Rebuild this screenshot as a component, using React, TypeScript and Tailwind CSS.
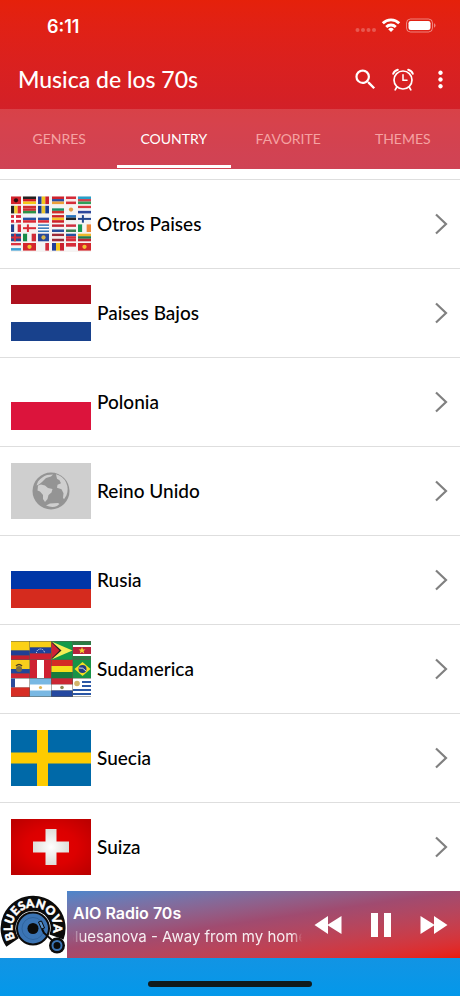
import React from "react";
import { MdMoreVert, MdSearch } from "react-icons/md";

type Pattern = { kind: "h" | "v" | "cross" | "disc"; colors: string[] };

function MiniFlag({ x, y, w, h, pattern }: { x: number; y: number; w: number; h: number; pattern: Pattern }) {
  const { kind, colors } = pattern;
  if (kind === "cross") {
    return (
      <g>
        <rect x={x} y={y} width={w} height={h} fill={colors[0]} />
        <rect x={x + w * 0.3} y={y} width={2} height={h} fill={colors[1]} />
        <rect x={x} y={y + h / 2 - 1} width={w} height={2} fill={colors[1]} />
      </g>
    );
  }
  if (kind === "disc") {
    return (
      <g>
        <rect x={x} y={y} width={w} height={h} fill={colors[0]} />
        <circle cx={x + w / 2} cy={y + h / 2} r={h * 0.28} fill={colors[1]} />
      </g>
    );
  }
  const n = colors.length;
  return (
    <g>
      {colors.map((c, i) =>
        kind === "h" ? (
          <rect key={i} x={x} y={y + (h * i) / n} width={w} height={h / n} fill={c} />
        ) : (
          <rect key={i} x={x + (w * i) / n} y={y} width={w / n} height={h} fill={c} />
        ),
      )}
    </g>
  );
}

const h = (...colors: string[]): Pattern => ({ kind: "h", colors });
const v = (...colors: string[]): Pattern => ({ kind: "v", colors });
const cross = (...colors: string[]): Pattern => ({ kind: "cross", colors });
const disc = (...colors: string[]): Pattern => ({ kind: "disc", colors });

const EUROPE: Pattern[][] = [
  [disc("#d5222b", "#2b0d10"), h("#222", "#d31b22", "#f5c816"), v("#1f3f98", "#f2c71d", "#c9202f"), h("#d0222c", "#2a4ba0", "#eda03a"), h("#d52b38", "#f7e9ea", "#d52b38"), h("#27a0c9", "#d0404f", "#2f9f58")],
  [v("#222", "#f2cf2b", "#dd2a33"), h("#cf2c2f", "#cf2c2f", "#2d9147"), v("#173d91", "#e8c42e", "#173d91"), h("#f2f2f2", "#159267", "#d22f2e"), disc("#f4f4f2", "#e69b45"), h("#dc3640", "#f1f1f4", "#2c479b")],
  [cross("#d9273c", "#fff"), h("#f3f3f6", "#2451a5", "#dc2a35"), h("#f3f3f6", "#2451a5", "#dc2a35"), h("#cb2029", "#f4c528", "#cb2029"), h("#2474be", "#222", "#f2f2f2"), cross("#f2f3f7", "#21458d")],
  [v("#24408f", "#f4f4f4", "#dc2b3a"), cross("#f7f0f0", "#d92a35"), h("#3478b7", "#fff", "#3478b7", "#fff", "#3478b7"), h("#c42736", "#f5f5f5", "#274e9d"), h("#cd2e3e", "#f5f5f5", "#387e50"), v("#199b55", "#f5f5f5", "#ee8438")],
  [cross("#234b91", "#d92e3d"), v("#188b48", "#f4f4f4", "#cf2b37"), disc("#28499a", "#d8b54c"), h("#9c2938", "#f5eeee", "#9c2938"), h("#2453a0", "#d42d3b", "#d42d3b"), h("#edb82c", "#217b4b", "#bd2836")],
  [h("#dc3440", "#f5f5f5", "#3ea1d5"), disc("#d3262c", "#f1c232"), v("#f4f4f4", "#f4f4f4", "#d12b3b"), v("#1f3f98", "#f2c71d", "#c9202f"), h("#d72c39", "#f5f5f5"), disc("#d3262c", "#f1c232")],
];

const EUROPE_COLUMNS = [
  [0, 10], [12, 13], [27, 11], [41, 12], [55, 10], [67, 13],
];

function EuropeFlags() {
  return (
    <svg viewBox="0 0 80 56" className="block size-full" aria-hidden="true">
      <rect width="80" height="56" fill="#f6f3f2" />
      {EUROPE.map((row, r) =>
        row.map((pattern, c) => (
          <MiniFlag key={`${r}-${c}`} x={EUROPE_COLUMNS[c][0]} y={0.5 + r * 9.3} w={EUROPE_COLUMNS[c][1]} h={7.6} pattern={pattern} />
        )),
      )}
    </svg>
  );
}

function SouthAmericaFlags() {
  return (
    <svg viewBox="0 0 80 56" className="block size-full" aria-hidden="true">
      <rect width="80" height="56" fill="#5a5a50" />
      <path d="M0 .5h18.500v9H0z" fill="#fbd116" />
      <path d="M0 9.500h18.500v5H0z" fill="#203f94" />
      <path d="M0 14.500h18.500v4H0z" fill="#c5202d" />
      <path d="M19 .5h21v6H19z" fill="#f8cf16" />
      <path d="M19 6.500h21v6H19z" fill="#1d419b" />
      <path d="M19 12.500h21v6H19z" fill="#ce2030" />
      <path d="M25.500 12a4 4 0 0 1 8 0" fill="none" stroke="#fff" strokeDasharray="1 1" />
      <path d="M40.500.5h21v18h-21z" fill="#139a49" />
      <path d="m40.500.5 21 9-21 9z" fill="#f6ed55" />
      <path d="m40.500.5 10 9-10 9z" fill="#222" />
      <path d="m40.500 1.500 8 8-8 8z" fill="#cf2235" />
      <path d="M62 .5h18v18H62z" fill="#2c7b45" />
      <path d="M62 4h18v11H62z" fill="#fff" />
      <path d="M62 6h18v7H62z" fill="#b9223c" />
      <path d="m71 6 1 2.500h2.500l-2 1.500.8 2.500-2.300-1.500-2.300 1.500.8-2.500-2-1.500H70z" fill="#f4d32d" />
      <path d="M0 19h18.500v9H0z" fill="#f8ce1c" />
      <path d="M0 28h18.500v4.500H0z" fill="#21479a" />
      <path d="M0 32.500h18.500V37H0z" fill="#cf2733" />
      <circle cx="8" cy="28" r="3" fill="#7a6b43" />
      <path d="M5 25q3-3 6 0" stroke="#4b3c29" fill="none" strokeWidth="1.500" />
      <path d="M19 19h21v18H19z" fill="#ce2031" />
      <path d="M26 19h7v18h-7z" fill="#fff" />
      <path d="M40.500 19h21v6h-21z" fill="#d32b25" />
      <path d="M40.500 25h21v6h-21z" fill="#f5df1b" />
      <path d="M40.500 31h21v6h-21z" fill="#167b3c" />
      <path d="M62 19h18v18H62z" fill="#179347" />
      <path d="m71.500 21 8 7-8 7-8-7z" fill="#f6df22" />
      <circle cx="71.500" cy="28" r="4" fill="#253d83" />
      <path d="M68 27q4-1 7 3" stroke="#fff" fill="none" strokeWidth=".8" />
      <path d="M0 37.500h18.500v9H0z" fill="#fff" />
      <path d="M0 37.500h4v9H0z" fill="#2b4c9c" />
      <path d="M0 46.500h18.500v9H0z" fill="#d62d24" />
      <path d="M19 37.500h21v18H19z" fill="#79b8e3" />
      <path d="M19 43.500h21v6H19z" fill="#fff" />
      <circle cx="29.500" cy="46.500" r="1.600" fill="#dfb454" />
      <path d="M40.500 37.500h21v6h-21z" fill="#cb2734" />
      <path d="M40.500 43.500h21v6h-21z" fill="#fff" />
      <path d="M40.500 49.500h21v6h-21z" fill="#2448a0" />
      <circle cx="51" cy="46.500" r="1.800" fill="#8b8855" />
      <path d="M62 37.500h18v18H62z" fill="#fff" />
      <path d="M71 40h9v2h-9zm0 4h9v2h-9zm-9 4h18v2H62zm0 4h18v2H62z" fill="#2b57a5" />
      <circle cx="66" cy="42.500" r="2.800" fill="#d3b56b" />
    </svg>
  );
}

function GlobePlaceholder() {
  return (
    <svg viewBox="0 0 80 56" className="block size-full" aria-hidden="true">
      <rect width="80" height="56" fill="#cfcfcf" />
      <circle cx="40" cy="28" r="18.500" fill="#949494" />
      <g fill="#cfcfcf">
        <path d="M27 18.500q4-5 9-6.500l6-.5-2 2-5 1.500-4 4-3 2.500-2.500 1z" />
        <path d="M27 22.500l3-1 4 1 3 2.500 4.500 1-1 3.500-3 2.500-1 4-2.500 3-2-3v-4l-3-3.500-2.500-1z" />
        <path d="M45 11.200q7 2 10 8 3 6.500.5 13l-2.500 4-1-1.500.5-4.500-2-4-4.500-1.500.500-3 3.500-1.500-1.500-3-2.500-1.500z" />
        <path d="M35 42.500l4-2 8-.5 1.500 1-2.500 2q-5 2-11-.5z" />
      </g>
    </svg>
  );
}

function Stripes({ colors }: { colors: string[] }) {
  return (
    <svg viewBox={`0 0 80 ${colors.length * 10}`} preserveAspectRatio="none" className="block size-full" shapeRendering="crispEdges" aria-hidden="true">
      {colors.map((c, i) => (
        <rect key={i} y={i * 10} width="80" height="10" fill={c} />
      ))}
    </svg>
  );
}

function Sweden() {
  return (
    <svg viewBox="0 0 80 56" className="block size-full" aria-hidden="true">
      <rect width="80" height="56" fill="#0069a8" />
      <path d="M26 0h11v56H26zM0 22.500h80v11H0z" fill="#fecb00" />
    </svg>
  );
}

function Switzerland() {
  return (
    <svg viewBox="0 0 80 56" className="block size-full" aria-hidden="true">
      <defs>
        <radialGradient id="swiss-red" r="0.65">
          <stop stopColor="#e60000" />
          <stop offset="0.5" stopColor="#dc0000" />
          <stop offset="1" stopColor="#bd0000" />
        </radialGradient>
        <radialGradient id="swiss-white">
          <stop stopColor="#fff" />
          <stop offset="1" stopColor="#deded9" />
        </radialGradient>
      </defs>
      <rect width="80" height="56" fill="url(#swiss-red)" />
      <path d="M34.500 10h11v12.500H58v11H45.500V46h-11V33.500H22v-11h12.500z" fill="url(#swiss-white)" />
    </svg>
  );
}

const COUNTRIES: { name: string; flag: React.ReactNode }[] = [
  { name: "Otros Paises", flag: <EuropeFlags /> },
  { name: "Paises Bajos", flag: <Stripes colors={["#ae111e", "#ffffff", "#18418c"]} /> },
  { name: "Polonia", flag: <Stripes colors={["#ffffff", "#dc143c"]} /> },
  { name: "Reino Unido", flag: <GlobePlaceholder /> },
  { name: "Rusia", flag: <Stripes colors={["#ffffff", "#0036a7", "#d52b1e"]} /> },
  { name: "Sudamerica", flag: <SouthAmericaFlags /> },
  { name: "Suecia", flag: <Sweden /> },
  { name: "Suiza", flag: <Switzerland /> },
];

const TABS = ["GENRES", "COUNTRY", "FAVORITE", "THEMES"];

function StatusBar() {
  return (
    <div className="flex h-[50px] items-center justify-between pt-[2px] pr-6 pl-[47px]">
      <span className="font-['Inter',sans-serif] text-[18px] font-semibold">6:11</span>
      <svg viewBox="0 0 82 16" className="h-4 w-[82px]" aria-hidden="true">
        <g fill="#fff" fillOpacity="0.25">
          <circle cx="3.500" cy="12" r="2" />
          <circle cx="9" cy="12" r="2" />
          <circle cx="14.500" cy="12" r="2" />
          <circle cx="20" cy="12" r="2" />
        </g>
        <g fill="none" stroke="#fff" strokeWidth="2.800">
          <path d="M28.800 5.300a11.500 11.500 0 0 1 16.400 0" />
          <path d="M32.200 8.900a7 7 0 0 1 9.600 0" />
        </g>
        <path d="M34.200 11.200a4 4 0 0 1 5.600 0L37 14z" fill="#fff" />
        <rect x="52.500" y="1" width="26" height="13" rx="4" fill="none" stroke="#fff" strokeOpacity="0.45" />
        <rect x="54.500" y="3" width="22" height="9" rx="2.200" fill="#fff" />
        <path d="M80 5.300q1.500.6 1.500 2.200T80 9.700z" fill="#fff" fillOpacity="0.45" />
      </svg>
    </div>
  );
}

function AlarmIcon() {
  return (
    <svg viewBox="0 0 24 24" className="size-6" fill="none" stroke="currentColor" strokeWidth="1.700" strokeLinecap="round" aria-hidden="true">
      <circle cx="12" cy="12" r="9" />
      <path d="M12 6.700v5.600h4" strokeWidth="1.500" />
      <path d="M2.200 5.700Q3.200 2.500 6.800 1.700M21.800 5.700Q20.800 2.500 17.200 1.700" strokeWidth="2" />
      <path d="m5.800 19-1.600 2.800M18.200 19l1.600 2.800" />
    </svg>
  );
}

function AlbumArt() {
  return (
    <svg viewBox="0 0 67 67" className="size-[67px] shrink-0 bg-white" role="img" aria-label="Bluesanova">
      <defs>
        <path id="logo-arc" d="M16.800 49.600A20.500 20.500 0 1 1 52.300 44" />
      </defs>
      <path d="M12.500 51.500A25 25 0 1 1 56.500 46" fill="none" stroke="#0b0b0b" strokeWidth="15" />
      <circle cx="33" cy="37.500" r="16" fill="#3b74b4" stroke="#0b0b0b" strokeWidth="2" />
      <circle cx="33" cy="37.500" r="11" fill="none" stroke="#28598e" strokeWidth=".6" />
      <circle cx="33" cy="37.500" r="5.500" fill="#0b0b0b" />
      <path d="m42 38 2 4 9 8" fill="none" stroke="#0b0b0b" strokeWidth="2" />
      <path d="m38.500 31 3-1 3 7-3 1z" fill="#5b93ca" stroke="#0b0b0b" />
      <circle cx="57" cy="54.500" r="8" fill="#0b0b0b" />
      <circle cx="57" cy="54.500" r="4.500" fill="none" stroke="#3b74b4" strokeWidth="2" />
      <text className="font-['Lato',sans-serif] text-[12px] font-black" fill="#fff" stroke="#fff" strokeWidth=".5">
        <textPath href="#logo-arc" startOffset="50%" textAnchor="middle">BLUESANOVA</textPath>
      </text>
    </svg>
  );
}

function SkipIcon({ className = "" }: { className?: string }) {
  return (
    <svg viewBox="0 0 28 18" className={`h-[18px] w-7 ${className}`} fill="currentColor" aria-hidden="true">
      <path d="M.5 0 14 8.500V0l13.500 9L14 18V9.500L.5 18z" />
    </svg>
  );
}

export default function App() {
  return (
    <div className="flex min-h-screen flex-col bg-white font-['Lato','Liberation_Sans',sans-serif]">
      <header className="bg-linear-to-b from-[#e5210a] via-[#d42026] via-60% to-[#c72338] text-white">
        <StatusBar />
        <div className="flex h-[59px] items-center justify-between pr-[6px] pl-[18px]">
          <h1 className="text-[23px] font-medium">Musica de los 70s</h1>
          <div className="flex items-center gap-3">
            <button type="button" aria-label="Search">
              <MdSearch className="size-[27px]" />
            </button>
            <button type="button" aria-label="Alarm">
              <AlarmIcon />
            </button>
            <button type="button" aria-label="More options">
              <MdMoreVert className="size-[27px]" />
            </button>
          </div>
        </div>
        <nav className="flex h-[60px] bg-white/15 pb-px pl-[2px]">
          {TABS.map((tab) => (
            <button
              key={tab}
              type="button"
              className={`flex-1 border-y-3 border-t-transparent text-[14px] ${tab === "COUNTRY" ? "border-b-white" : "border-b-transparent text-[#f5a3a3]"}`}
            >
              {tab}
            </button>
          ))}
        </nav>
      </header>

      <main className="flex flex-1 flex-col pt-[10px]">
        <ul className="flex flex-1 flex-col">
          {COUNTRIES.map(({ name, flag }) => (
            <li key={name} className="flex min-h-20 flex-1 border-t border-[#dedede]">
              <button type="button" className="flex flex-1 items-center pr-3 pl-[11px] text-left">
                <span className="h-14 w-20 shrink-0">{flag}</span>
                <span className="flex-1 pl-[6px] text-[19px] font-medium text-black">{name}</span>
                <svg viewBox="0 0 14 22" className="h-[22px] w-[14px]" fill="none" stroke="#808080" strokeWidth="2.200" aria-hidden="true">
                  <path d="m2 1.500 10 9.500L2 20.500" />
                </svg>
              </button>
            </li>
          ))}
        </ul>
      </main>

      <footer className="bg-linear-to-b from-[#1f8dd8] to-[#0398ea]">
        <div className="flex h-[67px] items-center bg-linear-to-br from-[#1f8ddb] via-[#a04b70] to-[#ea1a08] text-white">
          <AlbumArt />
          <div className="min-w-0 flex-1 pl-[6px] font-['Inter',sans-serif]">
            <p className="text-[16px] leading-6 font-semibold">AIO Radio 70s</p>
            <p className="overflow-hidden text-[15px] leading-6 whitespace-nowrap text-white/90 mask-[linear-gradient(to_right,transparent,black_10px,black_calc(100%-10px),transparent)]">
              <span className="-ml-2">Bluesanova - Away from my home</span>
            </p>
          </div>
          <div className="flex items-center gap-7 pr-3 pl-3">
            <button type="button" aria-label="Previous">
              <SkipIcon className="rotate-180" />
            </button>
            <button type="button" aria-label="Pause">
              <svg viewBox="0 0 22 24" className="h-6 w-[22px]" fill="currentColor" aria-hidden="true">
                <path d="M1 0h7v24H1zM14 0h7v24h-7z" />
              </svg>
            </button>
            <button type="button" aria-label="Next">
              <SkipIcon />
            </button>
          </div>
        </div>
        <div className="flex h-[38px] items-end justify-center pb-[9px]">
          <div className="h-[6px] w-[164px] rounded-full bg-[#101a1c]" />
        </div>
      </footer>
    </div>
  );
}
